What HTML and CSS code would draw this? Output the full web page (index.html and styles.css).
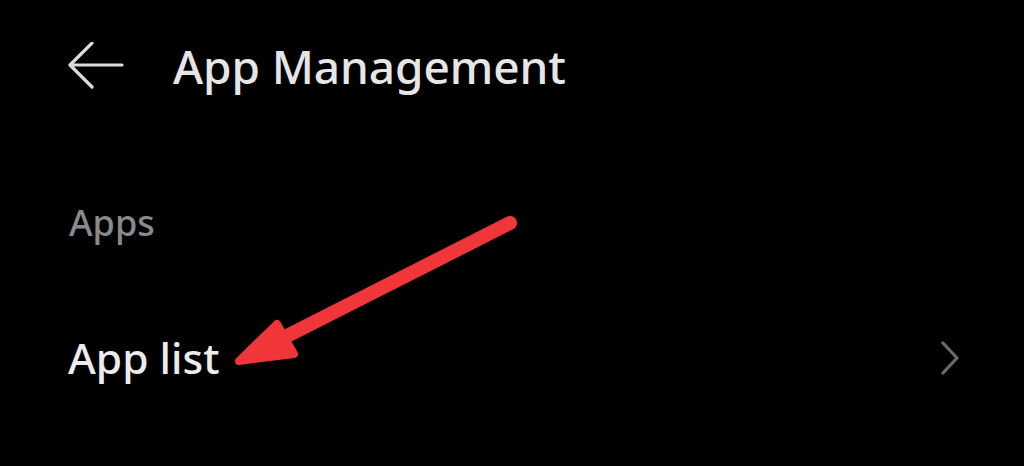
FILE: index.html
```html
<!DOCTYPE html>
<html>
<head>
<meta charset="utf-8">
<link rel="stylesheet" href="styles.css">
</head>
<body>
<div class="screen">
  <header class="topbar">
    <svg class="back" width="58" height="48" viewBox="0 0 58 48"><path d="M55 23 H3 M25 1 L3 23 L25 45" fill="none" stroke="#dcdcdc" stroke-width="3.2" stroke-linecap="round" stroke-linejoin="round"/></svg>
    <h1 class="title">App Management</h1>
  </header>
  <div class="section-label">Apps</div>
  <div class="row">
    <span class="row-text">App list</span>
    <svg class="chev" width="20" height="34" viewBox="0 0 20 34"><path d="M3 2 L17 17 L3 32" fill="none" stroke="#6a6a6a" stroke-width="3.2" stroke-linecap="round" stroke-linejoin="round"/></svg>
  </div>
  <svg class="annot" width="1024" height="466" viewBox="0 0 1024 466">
    <line x1="510" y1="223" x2="275" y2="342" stroke="#f03638" stroke-width="14" stroke-linecap="round"/>
    <path d="M239 361 L277 324 L294 354 Z" fill="#f03638" stroke="#f03638" stroke-width="8" stroke-linejoin="round"/>
  </svg>
</div>
</body>
</html>
```
FILE: styles.css
```css
html, body { margin: 0; padding: 0; background: #000; }
.screen { position: relative; width: 1024px; height: 466px; background: #000; font-family: "Noto Sans", "Open Sans", sans-serif; overflow: hidden; }
.topbar { display: flex; align-items: center; padding: 42px 0 0 67px; height: 48px; }
.back { display: block; }
.title { margin: 0 0 0 48px; font-size: 46px; font-weight: 500; color: #e6e6e6; line-height: 48px; letter-spacing: -0.1px; }
.section-label { margin: 113px 0 0 69px; font-size: 36px; font-weight: 500; color: #8a8a8a; line-height: 40px; }
.row { display: flex; align-items: center; justify-content: space-between; margin: 91px 0 0 68px; padding-right: 64px; height: 48px; }
.row-text { font-size: 42.5px; font-weight: 500; color: #ececec; line-height: 48px; }
.chev { display: block; }
.annot { position: absolute; left: 0; top: 0; pointer-events: none; }
```
